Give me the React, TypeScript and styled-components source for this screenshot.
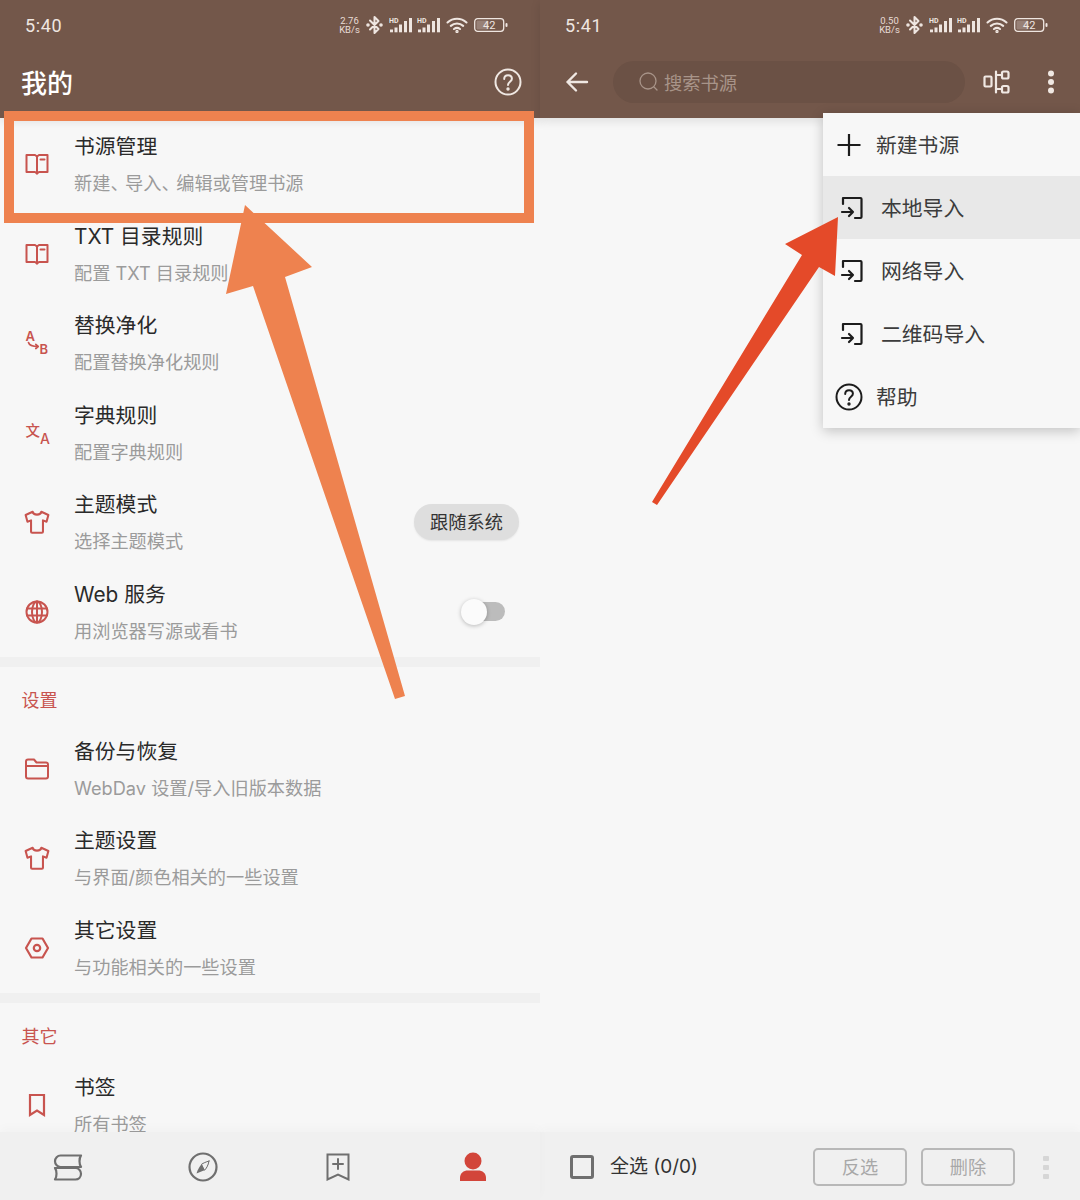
import React from "react";
import styled, { createGlobalStyle } from "styled-components";

const GlobalStyle = createGlobalStyle`
  html, body {
    margin: 0;
    padding: 0;
    background: #f7f7f7;
  }
  body {
    font-family: Inter, "Noto Sans CJK SC", "Noto Sans", sans-serif;
  }
  * {
    box-sizing: border-box;
  }
`;

const RED = "#c8544f";
const GREY = "#6f6f6f";
const INK = "#1c1c1c";

/* ─ page ─ */
const Page = styled.div`
  position: relative;
  display: flex;
  width: 1080px;
  height: 1200px;
  overflow: hidden;
`;

const Panel = styled.section`
  display: flex;
  flex-direction: column;
  width: 540px;
  height: 1200px;
  background: #f7f7f7;
`;

/* ─ header ─ */
const Header = styled.header`
  position: relative;
  z-index: 1;
  flex: none;
  height: 118px;
  background: #73574a;
  box-shadow: 0 3px 10px rgba(0, 0, 0, 0.1);
`;

const StatusBar = styled.div`
  display: flex;
  align-items: center;
  justify-content: space-between;
  height: 50px;
  padding: 0 32px 0 25px;
`;

const Clock = styled.span`
  font-family: Roboto, sans-serif;
  font-size: 18px;
  letter-spacing: 0.6px;
  color: #efe6e1;
`;

const StatusIcons = styled.div`
  display: flex;
  align-items: center;
  gap: 5.8px;
  color: #efe6e1;

  svg {
    display: block;
    flex: none;
  }
`;

const Speed = styled.span`
  width: 21px;
  font-family: Roboto, sans-serif;
  font-size: 9.5px;
  line-height: 9.5px;
  text-align: center;
  color: #e8dcd6;
`;

const Toolbar = styled.div`
  display: flex;
  align-items: center;
  height: 68px;
  padding-bottom: 4px;
`;

const PageTitle = styled.h1`
  flex: 1;
  margin: 0 0 0 21px;
  padding-bottom: 2px;
  font-size: 26px;
  font-weight: 500;
  color: #fff;
`;

const ToolIcon = styled.span<{ $width: number; $gap?: number; $lead?: number }>`
  display: flex;
  flex: none;
  align-items: center;
  justify-content: center;
  width: ${(p) => p.$width}px;
  margin-left: ${(p) => p.$lead ?? 0}px;
  margin-right: ${(p) => p.$gap ?? 0}px;
  color: #f0e8e3;
`;

const SearchPill = styled.div`
  display: flex;
  flex: none;
  align-items: center;
  gap: 6px;
  width: 352px;
  height: 42px;
  padding-left: 26px;
  margin-right: 13px;
  border-radius: 21px;
  background: #6b5145;
  color: #a89489;
  font-size: 18.3px;
`;

/* ─ settings list ─ */
const List = styled.div`
  flex: 1;
  min-height: 0;
  padding-top: 1.5px;
  overflow: hidden;
`;

const Row = styled.div`
  display: flex;
  align-items: center;
  height: 89.5px;
  padding-left: 25px;
`;

const RowIcon = styled.span`
  display: flex;
  flex: none;
  width: 24px;
  height: 24px;
  margin-right: 25px;
  align-items: center;
  justify-content: center;
  color: ${RED};

  svg {
    flex: none;
    overflow: visible;
  }
`;

const RowText = styled.div`
  display: flex;
  flex: 1;
  flex-direction: column;
  gap: 15px;
  padding-bottom: 4px;
`;

const RowTitle = styled.div`
  font-size: 20.8px;
  line-height: 27px;
  color: #2a2a2a;
`;

const RowSub = styled.div`
  font-size: 18.2px;
  line-height: 16px;
  color: #9b9b9b;
`;

// the source phone draws 、 narrower than a full em
const Pause = styled.span`
  letter-spacing: -3.5px;
`;

const Chip = styled.span`
  flex: none;
  width: 105px;
  height: 36px;
  margin-right: 21px;
  border-radius: 18px;
  background: #dedede;
  box-shadow: 0 1px 2px rgba(0, 0, 0, 0.08);
  font-size: 18.2px;
  line-height: 36px;
  text-align: center;
  color: #333;
`;

const Switch = styled.span`
  position: relative;
  flex: none;
  width: 31px;
  height: 19px;
  margin-right: 35px;
  border-radius: 0 10px 10px 0;
  background: #bcbcbc;
`;

const SwitchKnob = styled.span`
  position: absolute;
  top: -3px;
  left: -13px;
  width: 26px;
  height: 26px;
  border-radius: 50%;
  background: #fbfbfb;
  box-shadow: 0 1px 4px rgba(0, 0, 0, 0.25);
`;

const Divider = styled.div`
  height: 10px;
  background: #f0f0f0;
`;

const SectionLabel = styled.div`
  height: 57.5px;
  padding: 22.5px 0 0 21.5px;
  font-size: 18px;
  line-height: 24px;
  color: ${RED};
`;

/* ─ bottom bars ─ */
const BottomNav = styled.nav`
  position: relative;
  flex: none;
  display: grid;
  grid-template-columns: repeat(4, 135px);
  height: 68px;
  padding-top: 2px;
  background: #f0f0f0;
  box-shadow: 0 -4px 10px rgba(0, 0, 0, 0.025);
`;

const NavItem = styled.span<{ $active?: boolean }>`
  display: flex;
  align-items: center;
  justify-content: center;
  color: ${(p) => (p.$active ? "#d2453a" : GREY)};
`;

const EmptyBody = styled.div`
  flex: 1;
  min-height: 0;
`;

const ActionBar = styled.div`
  flex: none;
  display: flex;
  align-items: center;
  height: 68px;
  padding: 2px 0 0 30px;
  background: #f0f0f0;
  box-shadow: 0 -4px 10px rgba(0, 0, 0, 0.025);
`;

const CheckBox = styled.span`
  flex: none;
  width: 24px;
  height: 24px;
  margin-right: 16px;
  border: 3px solid ${GREY};
  border-radius: 3px;
`;

const SelectLabel = styled.span`
  flex: 1;
  font-size: 19px;
  line-height: 24px;
  color: #333;
`;

const GhostButton = styled.span`
  flex: none;
  width: 94px;
  height: 38px;
  margin-left: 14px;
  border: 2px solid #b8b8b8;
  border-radius: 5px;
  font-size: 18.2px;
  line-height: 35px;
  text-align: center;
  color: #a8a8a8;
`;

const MoreDots = styled.span`
  flex: none;
  display: flex;
  flex-direction: column;
  gap: 4px;
  width: 6px;
  margin: 0 31px 0 28px;

  i {
    display: block;
    height: 5px;
    border-radius: 1px;
    background: #d6d6d6;
  }
`;

/* ─ popup menu, lies over the toolbar edge ─ */
const Menu = styled.div`
  position: absolute;
  z-index: 2;
  top: 113px;
  left: 823px;
  width: 257px;
  background: #f7f7f7;
  box-shadow: 0 3px 12px rgba(0, 0, 0, 0.22);
`;

const MenuRow = styled.div<{ $active?: boolean }>`
  display: flex;
  align-items: center;
  height: 63px;
  padding-left: 12px;
  background: ${(p) => (p.$active ? "#e8e8e8" : "transparent")};
  color: ${INK};
`;

const MenuGlyph = styled.span`
  display: flex;
  flex: none;
  width: 28px;
  margin-right: 13px;
  align-items: center;
  justify-content: center;
`;

const MenuLabel = styled.span<{ $indent?: number }>`
  margin-left: ${(p) => p.$indent ?? 0}px;
  padding-bottom: 2px;
  font-size: 20.8px;
  color: #3c3c3c;
`;

/* ─ screenshot annotations ─ */
const HighlightFrame = styled.div`
  position: absolute;
  z-index: 3;
  top: 111px;
  left: 4px;
  width: 530px;
  height: 112px;
  border: 10px solid #ee824f;
`;

const Arrows = styled.svg`
  position: absolute;
  z-index: 4;
  top: 0;
  left: 0;
  pointer-events: none;
`;

/* ─ icons ─ */
type IconProps = { size?: number };

const stroke = (w: number) => ({
  fill: "none",
  stroke: "currentColor",
  strokeWidth: w,
  strokeLinecap: "round" as const,
  strokeLinejoin: "round" as const,
});

const Book = () => (
  <svg width="24" height="24" viewBox="0 0 24 24" {...stroke(2)}>
    <path d="M1.5 3h8.5l2 1.5L14 3h8.5v17H14l-2 1.5L10 20H1.5z" />
    <path d="M12 4.5v17M15.5 7.5h4" />
  </svg>
);

const AtoB = () => (
  <svg width="24" height="24" viewBox="0 0 24 24">
    <text x="0.5" y="9.5" fontSize="13" fontWeight="600" fill="currentColor">A</text>
    <text x="14.5" y="22.5" fontSize="13" fontWeight="600" fill="currentColor">B</text>
    <path d="M3.5 11.5c.8 3 3 4 9.5 4M10.8 13.400l2.400 2.100-2.400 2" {...stroke(1.7)} />
  </svg>
);

const Translate = () => (
  <svg width="24" height="24" viewBox="0 0 24 24">
    <text x="0.5" y="15" fontSize="14.5" fontWeight="500" fill="currentColor" fontFamily="'Noto Sans CJK SC', sans-serif">文</text>
    <text x="15" y="23" fontSize="14" fontWeight="500" fill="currentColor">A</text>
  </svg>
);

const Shirt = () => (
  <svg width="26" height="26" viewBox="0 0 24 24" {...stroke(1.9)}>
    <path d="M8 2.500 1.500 5.500l1.700 6.200L6.500 10.500V21c0 .6.400 1 1 1h9c.6 0 1-.4 1-1V10.500l3.300 1.200 1.700-6.200L16 2.500c-.7 3.600-7.300 3.600-8 0z" />
  </svg>
);

const Globe = () => (
  <svg width="24" height="24" viewBox="0 0 24 24" {...stroke(2)}>
    <circle cx="12" cy="12" r="10.500" />
    <ellipse cx="12" cy="12" rx="5" ry="10.500" />
    <path d="M2 8.500h20M2 15.500h20M12 1.500v21" />
  </svg>
);

const Folder = () => (
  <svg width="24" height="24" viewBox="0 0 24 24" {...stroke(2)}>
    <path d="M1 4.500C1 3.300 1.800 2.500 3 2.500h6l2.500 3H21c1.200 0 2 .8 2 2v12c0 1.200-.8 2-2 2H3c-1.200 0-2-.8-2-2z" />
    <path d="M1 9h22" />
  </svg>
);

const Nut = () => (
  <svg width="24" height="24" viewBox="0 0 24 24" {...stroke(2.2)}>
    <path d="M6.500 2.500h11L23 12l-5.500 9.500h-11L1 12z" />
    <circle cx="12" cy="12" r="3.200" />
  </svg>
);

const Bookmark = () => (
  <svg width="18" height="24" viewBox="0 0 18 24" {...stroke(2.2)} strokeLinejoin="miter">
    <path d="M2 2h14v20l-7-4.500L2 22z" />
  </svg>
);

const Help = ({ size = 28 }: IconProps) => (
  <svg width={size} height={size} viewBox="0 0 28 28" {...stroke(2)}>
    <circle cx="14" cy="14" r="12.500" />
    <path d="M10.200 11c0-2.300 1.700-3.800 3.900-3.800s3.800 1.500 3.800 3.500c0 3-3.900 3.200-3.900 6.300" />
    <circle cx="14" cy="21" r="0.700" fill="currentColor" />
  </svg>
);

const Bluetooth = () => (
  <svg width="17" height="20" viewBox="0 0 17 20" {...stroke(2)}>
    <path d="M4 5.500l8.500 8.500L8.500 18V2l4 4L4 14.500" />
    <circle cx="2" cy="10" r="0.800" fill="currentColor" />
    <circle cx="15" cy="10" r="0.800" fill="currentColor" />
  </svg>
);

const Signal = () => (
  <svg width="23" height="16" viewBox="0 0 23 16">
    <text x="0" y="5.500" fontSize="7" fontWeight="700" fontFamily="Roboto, sans-serif" fill="currentColor">HD</text>
    <g fill="currentColor">
      <rect x="1" y="12.500" width="3" height="2.800" />
      <rect x="5.500" y="10.500" width="3" height="4.800" />
      <rect x="10" y="7.500" width="3" height="7.800" />
      <rect x="15" y="4" width="3" height="11.300" />
      <rect x="20" y="1" width="3" height="14.300" />
    </g>
  </svg>
);

const Wifi = () => (
  <svg width="22" height="16" viewBox="0 0 22 16" {...stroke(2.1)}>
    <path d="M1.500 5.500c5.500-5 13.500-5 19 0M4.800 8.900c3.600-3.200 8.800-3.200 12.400 0M8 12c1.800-1.400 4.200-1.400 6 0" />
    <circle cx="11" cy="14.500" r="0.600" fill="currentColor" />
  </svg>
);

const Battery = () => (
  <svg width="34" height="14" viewBox="0 0 34 14">
    <rect x="0.700" y="0.700" width="29" height="12.600" rx="3" fill="none" stroke="currentColor" strokeWidth="1.300" />
    <rect x="2.500" y="2.500" width="12" height="9" rx="1" fill="currentColor" opacity="0.3" />
    <rect x="31.500" y="5" width="2" height="4" rx="1" fill="currentColor" />
    <text x="15.200" y="11" fontSize="11" fontFamily="Roboto, sans-serif" textAnchor="middle" fill="currentColor">42</text>
  </svg>
);

const BackArrow = () => (
  <svg width="24" height="24" viewBox="0 0 24 24" {...stroke(2.4)}>
    <path d="M22 12H2.500M11 3.500 2.500 12l8.500 8.500" />
  </svg>
);

const SearchGlyph = () => (
  <svg width="19" height="20" viewBox="0 0 19 20" {...stroke(1.3)}>
    <circle cx="9" cy="9" r="8" />
    <path d="M15 15l3 3" />
  </svg>
);

const Nodes = () => (
  <svg width="27" height="26" viewBox="0 0 27 26" {...stroke(2.2)}>
    <rect x="1.500" y="7.500" width="7" height="10" rx="1" />
    <path d="M13 2.500v21M13 6h5M13 20h5" />
    <rect x="19" y="2.500" width="6.500" height="7" rx="1.500" />
    <rect x="19" y="17" width="6.500" height="6.500" rx="1.500" />
  </svg>
);

const VerticalDots = () => (
  <svg width="8" height="24" viewBox="0 0 8 24" fill="currentColor">
    <circle cx="4" cy="3.500" r="3" />
    <circle cx="4" cy="12" r="3" />
    <circle cx="4" cy="20.500" r="3" />
  </svg>
);

const Plus = () => (
  <svg width="24" height="24" viewBox="0 0 24 24" {...stroke(2.2)} strokeLinecap="butt">
    <path d="M0.500 12h23M12 1v22" />
  </svg>
);

const ImportBox = () => (
  <svg width="28" height="24" viewBox="0 0 28 24" {...stroke(2.2)}>
    <path d="M8 8V2h17.500a1 1 0 0 1 1 1v18a1 1 0 0 1-1 1H20" />
    <path d="M7 16h11M14 12l4 4-4 4" />
  </svg>
);

const NavBooks = () => (
  <svg width="30" height="27" viewBox="0 0 30 27" {...stroke(2.2)}>
    <path d="M28 1.500H7.500C4.500 1.500 2 4 2 7.200s2.500 5.800 5.500 5.800H28c-2-2.700-2-8.800 0-11.500z" />
    <path d="M2 14h20.500c3 0 5.500 2.500 5.500 5.800s-2.500 5.700-5.500 5.700H2c2-2.700 2-8.800 0-11.500z" />
  </svg>
);

const NavCompass = () => (
  <svg width="30" height="30" viewBox="0 0 30 30" {...stroke(2.2)}>
    <circle cx="15" cy="15" r="13.500" />
    <path d="M21 9c-.7 4.500-2.800 7.800-4.600 9.300L8.500 21.500c1-3.600 3.300-7.500 5-9.200z" fill="currentColor" stroke="none" />
    <path d="M21 9c-3.200 1-5.600 2-7.500 3.300l2.900 6C18.200 16.800 20.300 13.500 21 9z" fill="#f0f0f0" stroke="currentColor" strokeWidth="1" />
  </svg>
);

const NavBookmarkPlus = () => (
  <svg width="24" height="28" viewBox="0 0 24 28" {...stroke(2)} strokeLinejoin="miter">
    <path d="M1.500 1.500h21v25L12 21.500 1.500 26.500z" />
    <path d="M7 11h10M12 6v10" />
  </svg>
);

const NavUser = () => (
  <svg width="28" height="30" viewBox="0 0 28 30" fill="currentColor">
    <circle cx="14" cy="9" r="8.500" />
    <path d="M1 29v-3c0-5 3.500-7.500 8-7.500h10c4.500 0 8 2.500 8 7.500v3z" />
  </svg>
);

/* ─ data ─ */
type Item = { icon: React.ReactNode; title: string; sub: React.ReactNode; trailing?: React.ReactNode };

const mainItems: Item[] = [
  {
    icon: <Book />,
    title: "书源管理",
    sub: (
      <>
        新建<Pause>、</Pause>导入<Pause>、</Pause>编辑或管理书源
      </>
    ),
  },
  { icon: <Book />, title: "TXT 目录规则", sub: "配置 TXT 目录规则" },
  { icon: <AtoB />, title: "替换净化", sub: "配置替换净化规则" },
  { icon: <Translate />, title: "字典规则", sub: "配置字典规则" },
  { icon: <Shirt />, title: "主题模式", sub: "选择主题模式", trailing: <Chip>跟随系统</Chip> },
  {
    icon: <Globe />,
    title: "Web 服务",
    sub: "用浏览器写源或看书",
    trailing: (
      <Switch>
        <SwitchKnob />
      </Switch>
    ),
  },
];

const settingItems: Item[] = [
  { icon: <Folder />, title: "备份与恢复", sub: "WebDav 设置/导入旧版本数据" },
  { icon: <Shirt />, title: "主题设置", sub: "与界面/颜色相关的一些设置" },
  { icon: <Nut />, title: "其它设置", sub: "与功能相关的一些设置" },
];

const otherItems: Item[] = [{ icon: <Bookmark />, title: "书签", sub: "所有书签" }];

const renderRows = (items: Item[]) =>
  items.map((item) => (
    <Row key={item.title}>
      <RowIcon>{item.icon}</RowIcon>
      <RowText>
        <RowTitle>{item.title}</RowTitle>
        <RowSub>{item.sub}</RowSub>
      </RowText>
      {item.trailing}
    </Row>
  ));

const Status: React.FC<{ time: string; speed: string }> = ({ time, speed }) => (
  <StatusBar>
    <Clock>{time}</Clock>
    <StatusIcons>
      <Speed>
        {speed}
        <br />
        KB/s
      </Speed>
      <Bluetooth />
      <Signal />
      <Signal />
      <Wifi />
      <Battery />
    </StatusIcons>
  </StatusBar>
);

const App: React.FC = () => (
  <Page>
    <GlobalStyle />

    <Panel>
      <Header>
        <Status time="5:40" speed="2.76" />
        <Toolbar>
          <PageTitle>我的</PageTitle>
          <ToolIcon $width={28} $gap={18}>
            <Help />
          </ToolIcon>
        </Toolbar>
      </Header>
      <List>
        {renderRows(mainItems)}
        <Divider />
        <SectionLabel>设置</SectionLabel>
        {renderRows(settingItems)}
        <Divider />
        <SectionLabel>其它</SectionLabel>
        {renderRows(otherItems)}
      </List>
      <BottomNav>
        <NavItem>
          <NavBooks />
        </NavItem>
        <NavItem>
          <NavCompass />
        </NavItem>
        <NavItem>
          <NavBookmarkPlus />
        </NavItem>
        <NavItem $active>
          <NavUser />
        </NavItem>
      </BottomNav>
    </Panel>

    <Panel>
      <Header>
        <Status time="5:41" speed="0.50" />
        <Toolbar>
          <ToolIcon $width={73}>
            <BackArrow />
          </ToolIcon>
          <SearchPill>
            <SearchGlyph />
            搜索书源
          </SearchPill>
          <ToolIcon $width={36}>
            <Nodes />
          </ToolIcon>
          <ToolIcon $width={8} $lead={33}>
            <VerticalDots />
          </ToolIcon>
        </Toolbar>
      </Header>
      <EmptyBody />
      <ActionBar>
        <CheckBox />
        <SelectLabel>全选 (0/0)</SelectLabel>
        <GhostButton>反选</GhostButton>
        <GhostButton>删除</GhostButton>
        <MoreDots>
          <i />
          <i />
          <i />
        </MoreDots>
      </ActionBar>
    </Panel>

    <Menu>
      <MenuRow>
        <MenuGlyph>
          <Plus />
        </MenuGlyph>
        <MenuLabel>新建书源</MenuLabel>
      </MenuRow>
      <MenuRow $active>
        <MenuGlyph>
          <ImportBox />
        </MenuGlyph>
        <MenuLabel $indent={5}>本地导入</MenuLabel>
      </MenuRow>
      <MenuRow>
        <MenuGlyph>
          <ImportBox />
        </MenuGlyph>
        <MenuLabel $indent={5}>网络导入</MenuLabel>
      </MenuRow>
      <MenuRow>
        <MenuGlyph>
          <ImportBox />
        </MenuGlyph>
        <MenuLabel $indent={5}>二维码导入</MenuLabel>
      </MenuRow>
      <MenuRow>
        <MenuGlyph>
          <Help />
        </MenuGlyph>
        <MenuLabel>帮助</MenuLabel>
      </MenuRow>
    </Menu>

    <HighlightFrame />
    <Arrows width="1080" height="1200" viewBox="0 0 1080 1200">
      <polygon
        points="245,205 312,267 285,277 405,696 395,699 253,286 226,294"
        fill="#ee824f"
      />
      <polygon
        points="838,217 835,276 819,267 657,505 652,502 802,255 785,244"
        fill="#e44a29"
      />
    </Arrows>
  </Page>
);

export default App;
